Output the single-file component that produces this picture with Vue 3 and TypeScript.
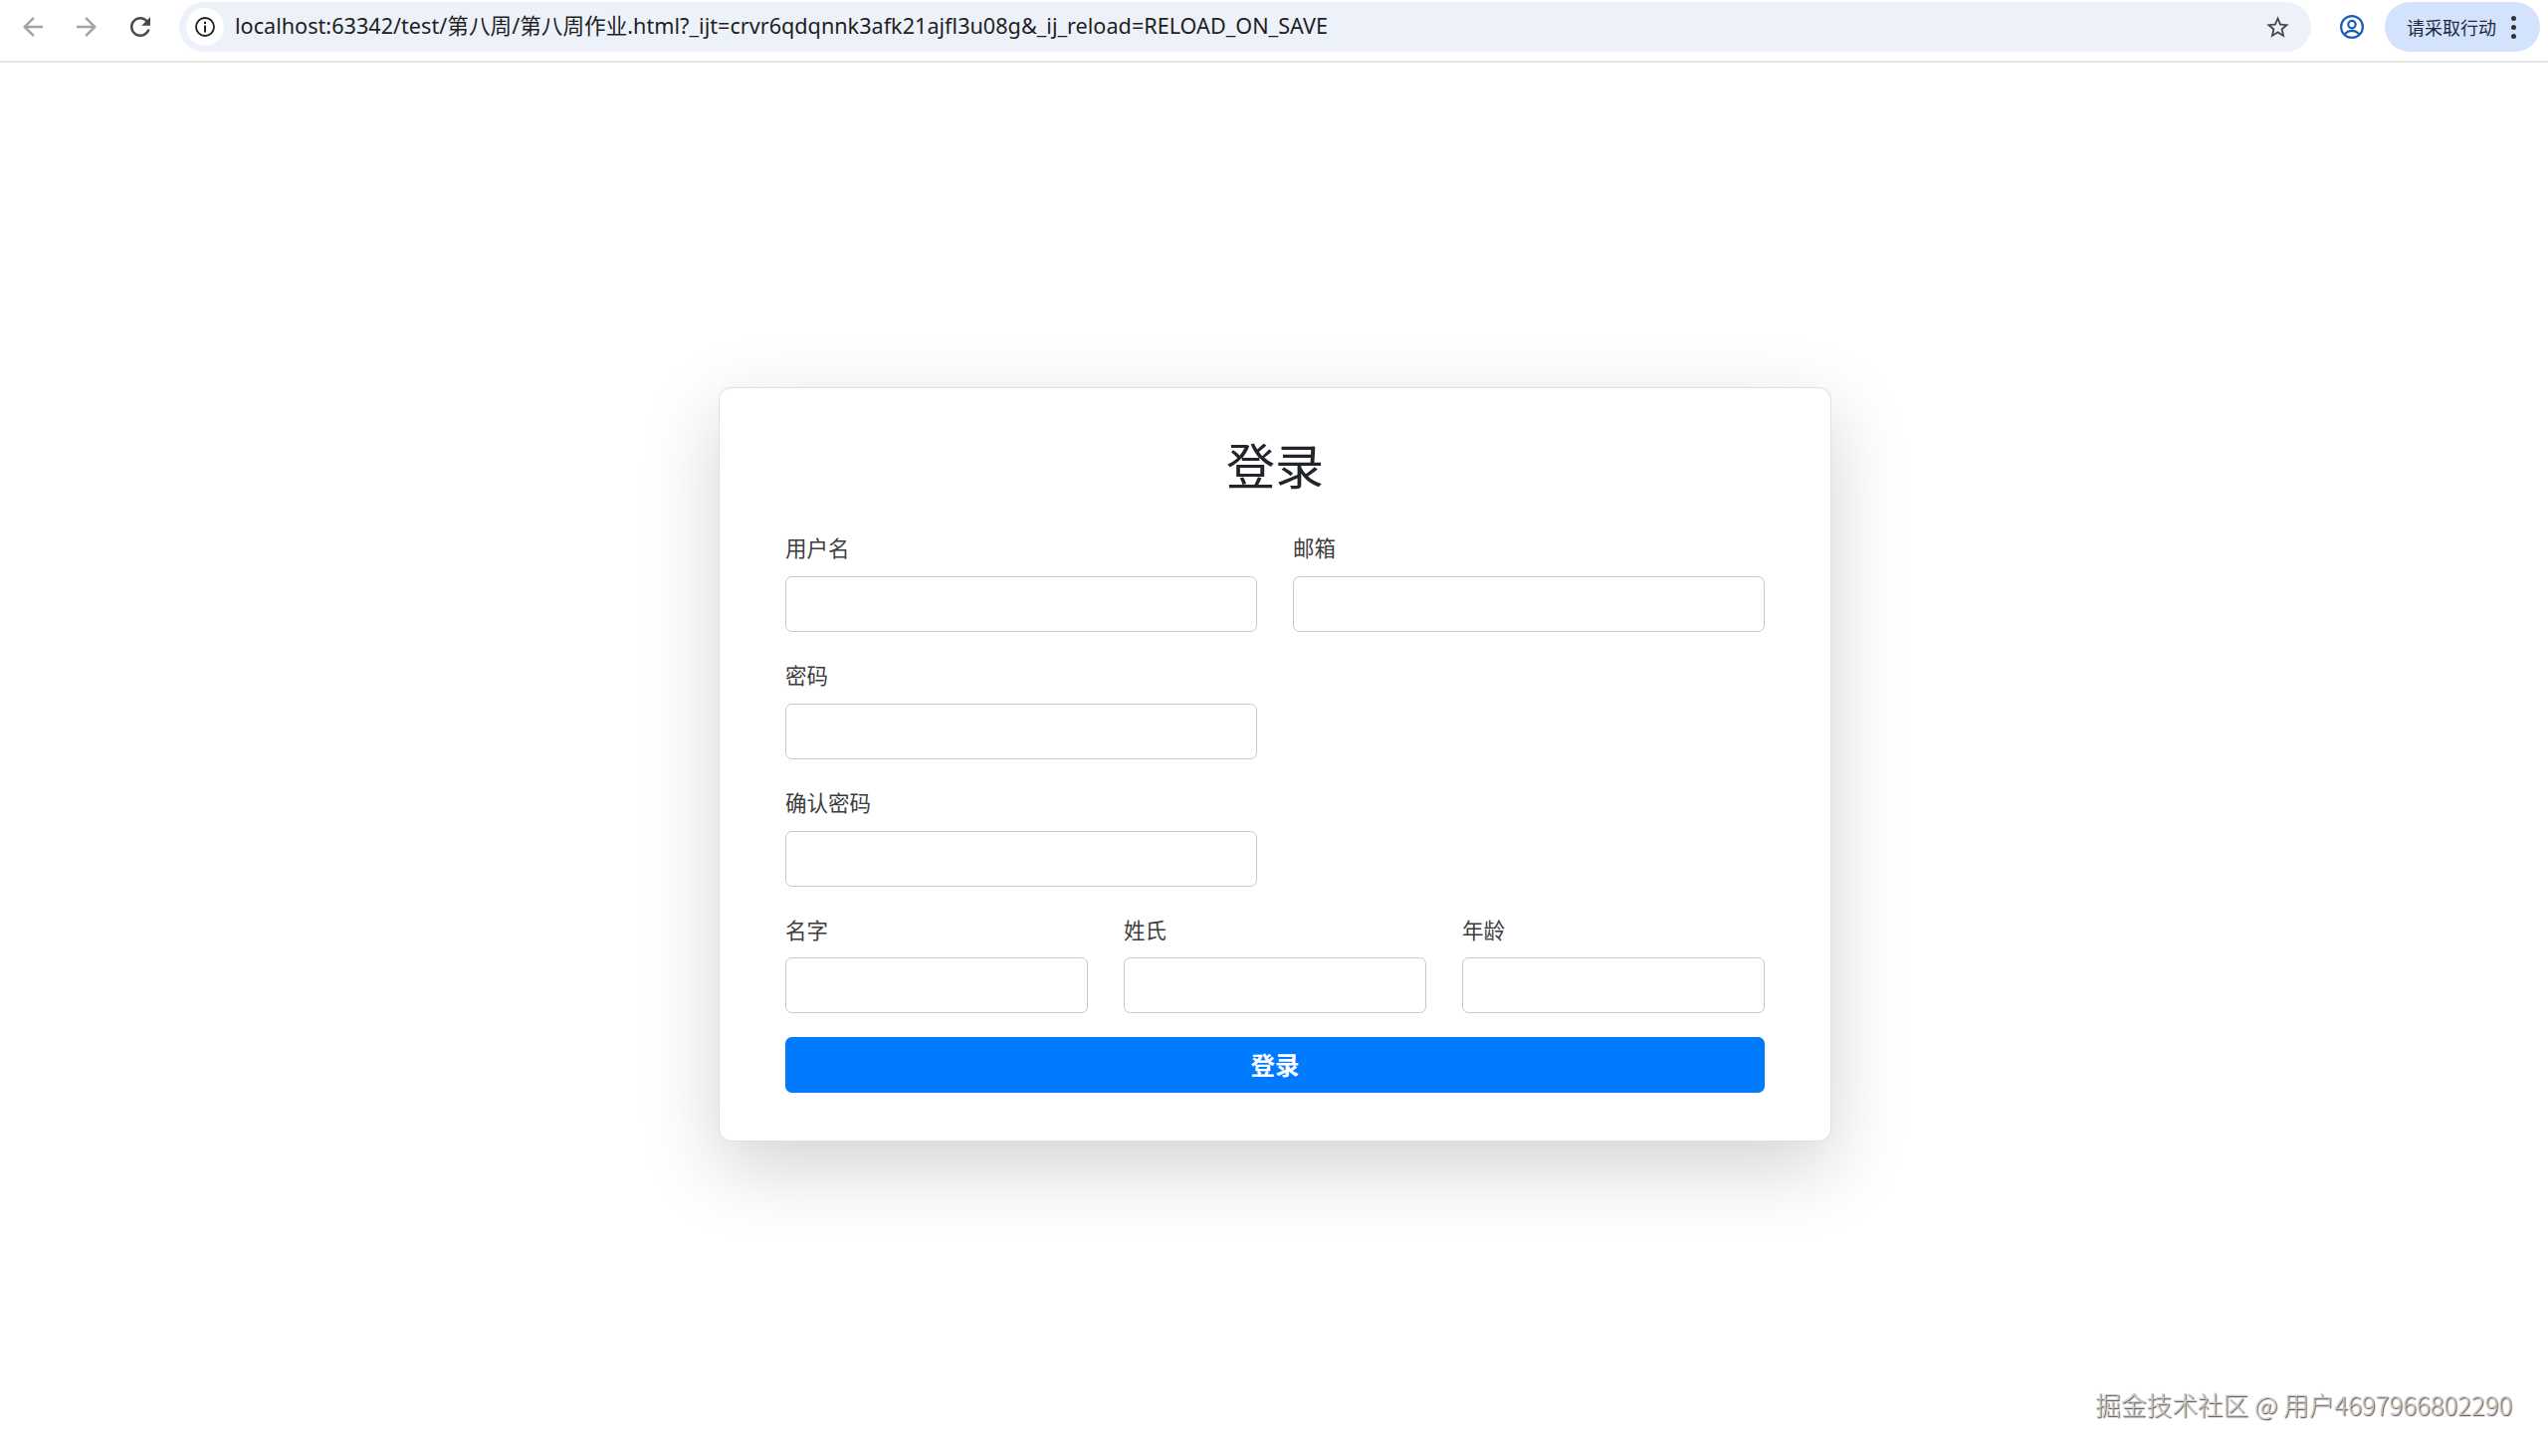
<script setup lang="ts">
interface Field { label: string; type: string }
const rows: { cols: number; fields: Field[] }[] = [
  { cols: 2, fields: [{ label: '用户名', type: 'text' }, { label: '邮箱', type: 'email' }] },
  { cols: 2, fields: [{ label: '密码', type: 'password' }] },
  { cols: 2, fields: [{ label: '确认密码', type: 'password' }] },
  { cols: 3, fields: [{ label: '名字', type: 'text' }, { label: '姓氏', type: 'text' }, { label: '年龄', type: 'number' }] },
]
</script>

<template>
  <div class="page">
    <header class="toolbar">
      <div class="nav">
        <span class="cell">
          <svg class="ico muted" viewBox="0 0 24 24"><path d="M20 11H7.83l5.59-5.59L12 4l-8 8 8 8 1.41-1.41L7.83 13H20v-2z" /></svg>
        </span>
        <span class="cell">
          <svg class="ico muted" viewBox="0 0 24 24"><path d="M12 4l-1.41 1.41L16.17 11H4v2h12.17l-5.58 5.59L12 20l8-8z" /></svg>
        </span>
        <span class="cell">
          <svg class="ico dark" viewBox="0 0 24 24"><path d="M17.65 6.35C16.2 4.9 14.21 4 12 4c-4.42 0-7.99 3.58-7.99 8s3.57 8 7.99 8c3.73 0 6.84-2.55 7.73-6h-2.08c-.82 2.33-3.04 4-5.65 4-3.31 0-6-2.69-6-6s2.69-6 6-6c1.66 0 3.14.69 4.22 1.78L13 11h7V4l-2.35 2.35z" /></svg>
        </span>
      </div>
      <div class="omnibox">
        <span class="site-chip">
          <svg class="info" viewBox="0 0 22 22">
            <circle cx="11" cy="11" r="9" fill="none" stroke="#1f1f1f" stroke-width="1.8" />
            <rect x="10" y="9.500" width="2" height="7" fill="#1f1f1f" />
            <rect x="10" y="5.800" width="2" height="2.200" fill="#1f1f1f" />
          </svg>
        </span>
        <span class="url">localhost:63342/test/第八周/第八周作业.html?_ijt=crvr6qdqnnk3afk21ajfl3u08g&amp;_ij_reload=RELOAD_ON_SAVE</span>
        <svg class="star" viewBox="0 0 24 24"><path d="M22 9.24l-7.19-.62L12 2 9.19 8.63 2 9.24l5.46 4.73L5.82 21 12 17.27 18.18 21l-1.63-7.03L22 9.24zM12 15.4l-3.76 2.27 1-4.28-3.32-2.88 4.38-.38L12 6.1l1.71 4.04 4.38.38-3.32 2.88 1 4.28L12 15.4z" /></svg>
      </div>
      <span class="profile-cell">
        <svg class="profile" viewBox="0 0 26 26" fill="none" stroke="#1a5bb8" stroke-width="2.2">
          <circle cx="13" cy="13" r="10.9" />
          <circle cx="13" cy="10.6" r="3.7" />
          <path d="M5.8 20.2c2-2.4 4.4-3.4 7.2-3.4s5.200 1 7.200 3.400" />
        </svg>
      </span>
      <div class="action">
        <span class="action-text">请采取行动</span>
        <span class="dots"><i></i><i></i><i></i></span>
      </div>
    </header>

    <main class="stage">
      <section class="card">
        <h1 class="title">登录</h1>
        <form class="form" @submit.prevent>
          <div
            v-for="(row, r) in rows"
            :key="r"
            class="row"
            :class="row.cols === 3 ? 'row-3' : 'row-2'"
          >
            <div v-for="field in row.fields" :key="field.label" class="group">
              <label class="label">{{ field.label }}</label>
              <input class="input" :type="field.type" :aria-label="field.label" />
            </div>
          </div>
          <button class="submit" type="submit">登录</button>
        </form>
      </section>
    </main>

    <div class="watermark">掘金技术社区 @ 用户4697966802290</div>
  </div>
</template>

<style scoped>
.page {
  position: relative;
  display: flex;
  flex-direction: column;
  height: 1463px;
  overflow: hidden;
  background: #fff;
  font-family: "Noto Sans CJK SC", "Noto Sans", sans-serif;
  color: #212529;
}
.toolbar {
  flex: none;
  box-sizing: border-box;
  height: 63px;
  display: flex;
  align-items: flex-start;
  padding: 2px 8px 0 6px;
  border-bottom: 2px solid #e4e4e4;
  background: #fff;
}
.nav {
  display: flex;
  margin-right: 12px;
}
.cell {
  width: 54px;
  height: 50px;
  display: flex;
  align-items: center;
  justify-content: center;
}
.ico {
  width: 30px;
  height: 30px;
}
.muted { fill: #a3a3a3; }
.dark { fill: #474747; }
.omnibox {
  flex: 1;
  height: 50px;
  display: flex;
  align-items: center;
  padding-left: 7px;
  padding-right: 20px;
  border-radius: 25px;
  background: #edf2fa;
}
.site-chip {
  flex: none;
  width: 38px;
  height: 38px;
  border-radius: 50%;
  background: #fff;
  display: flex;
  align-items: center;
  justify-content: center;
}
.info {
  width: 22px;
  height: 22px;
}
.url {
  flex: 1;
  margin-left: 11px;
  margin-bottom: 2px;
  font-family: "Noto Sans", "Noto Sans CJK SC", sans-serif;
  font-size: 21.63px;
  line-height: 48px;
  white-space: nowrap;
  color: #1f1f1f;
}
.star {
  flex: none;
  width: 27px;
  height: 27px;
  fill: #474747;
}
.profile-cell {
  flex: none;
  box-sizing: border-box;
  width: 74px;
  height: 50px;
  padding-left: 8px;
  display: flex;
  align-items: center;
  justify-content: center;
}
.profile {
  width: 26px;
  height: 26px;
}
.action {
  flex: none;
  width: 156px;
  height: 50px;
  box-sizing: border-box;
  display: flex;
  align-items: center;
  padding-left: 22px;
  border-radius: 25px;
  background: #d3e3fd;
}
.action-text {
  font-size: 18px;
  color: #1f2a3a;
  white-space: nowrap;
}
.dots {
  display: flex;
  flex-direction: column;
  gap: 4px;
  margin-left: 15px;
}
.dots i {
  display: block;
  width: 5px;
  height: 5px;
  border-radius: 50%;
  background: #333;
}
.stage {
  flex: 1;
  display: flex;
  align-items: center;
  justify-content: center;
  padding: 10px 0 0 2px;
}
.card {
  box-sizing: border-box;
  width: 1118px;
  padding: 45px 66px 47.5px;
  border: 1px solid rgba(0, 0, 0, 0.125);
  border-radius: 13px;
  background: #fff;
  box-shadow: 0 26px 78px rgba(0, 0, 0, 0.175);
}
.title {
  margin: 0 0 34.3px;
  text-align: center;
  font-size: 49px;
  font-weight: 400;
  line-height: 62px;
  color: #212529;
}
.form {
  display: block;
}
.row {
  display: grid;
  column-gap: 36px;
}
.row-2 { grid-template-columns: repeat(2, 1fr); }
.row-3 { grid-template-columns: repeat(3, 1fr); }
.group {
  margin-bottom: 24px;
}
.label {
  display: block;
  margin-bottom: 9.5px;
  font-size: 21.5px;
  line-height: 38.2px;
  color: #3d3d3d;
}
.input {
  display: block;
  box-sizing: border-box;
  width: 100%;
  height: 56px;
  border: 1.5px solid #c8c8c8;
  border-radius: 6.5px;
  background: #fff;
  outline: none;
}
.submit {
  display: block;
  width: 100%;
  height: 56px;
  padding: 0 0 2px;
  border: 0;
  border-radius: 6.5px;
  background: #007bff;
  color: #fff;
  font-family: inherit;
  font-size: 24.5px;
  font-weight: 700;
}
.watermark {
  position: absolute;
  right: 36px;
  bottom: 34px;
  font-size: 25.7px;
  font-weight: 300;
  line-height: 36px;
  white-space: nowrap;
  color: #cacaca;
  text-shadow: 1px 1px 1px #444;
}
</style>

<style>
html, body {
  margin: 0;
  background: #fff;
}
</style>
